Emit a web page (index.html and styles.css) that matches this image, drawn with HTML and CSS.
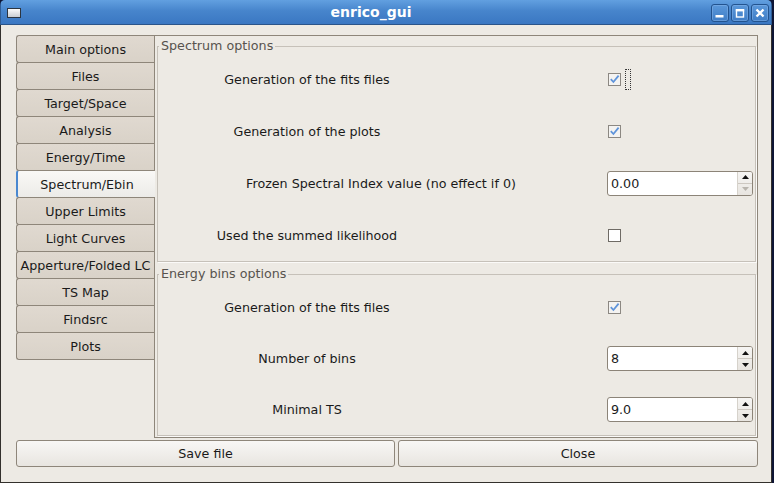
FILE: index.html
```html
<!DOCTYPE html>
<html>
<head>
<meta charset="utf-8">
<title>enrico_gui</title>
<link rel="stylesheet" href="styles.css">
</head>
<body>
<div class="window">
  <div class="titlebar">
    <span class="winicon"></span>
    <span class="title">enrico_gui</span>
    <div class="wbtns">
      <span class="wbtn"><svg width="16" height="16" viewBox="0 0 16 16"><rect x="3.5" y="10" width="8" height="2.5" fill="#fff"/></svg></span>
      <span class="wbtn"><svg width="16" height="16" viewBox="0 0 16 16"><rect x="4.5" y="5" width="7" height="7" fill="none" stroke="#fff" stroke-width="1.4"/><rect x="3.8" y="4" width="8.4" height="2.4" fill="#fff"/></svg></span>
      <span class="wbtn"><svg width="16" height="16" viewBox="0 0 16 16"><path d="M4.5 4.5 L11.5 11.5 M11.5 4.5 L4.5 11.5" stroke="#fff" stroke-width="2.3" fill="none"/></svg></span>
    </div>
  </div>
  <div class="body">
    <div class="notebook">
      <div class="tabs">
        <div class="tab">Main options</div>
        <div class="tab">Files</div>
        <div class="tab">Target/Space</div>
        <div class="tab">Analysis</div>
        <div class="tab">Energy/Time</div>
        <div class="tab active">Spectrum/Ebin</div>
        <div class="tab">Upper Limits</div>
        <div class="tab">Light Curves</div>
        <div class="tab">Apperture/Folded LC</div>
        <div class="tab">TS Map</div>
        <div class="tab">Findsrc</div>
        <div class="tab">Plots</div>
      </div>
      <div class="page">
        <fieldset class="frame f1">
          <legend>Spectrum options</legend>
          <div class="row">
            <span class="lbl">Generation of the fits files</span>
            <span class="cbw"><span class="cb on"><svg width="11" height="11" viewBox="0 0 11 11"><path d="M1.8 5.2 L4.4 8 L9.6 1.6" fill="none" stroke="#5f94da" stroke-width="1.8"/></svg></span><span class="focus"></span></span>
          </div>
          <div class="row">
            <span class="lbl">Generation of the plots</span>
            <span class="cbw"><span class="cb on"><svg width="11" height="11" viewBox="0 0 11 11"><path d="M1.8 5.2 L4.4 8 L9.6 1.6" fill="none" stroke="#5f94da" stroke-width="1.8"/></svg></span></span>
          </div>
          <div class="row">
            <span class="lbl wide">Frozen Spectral Index value (no effect if 0)</span>
            <div class="spin"><span class="sv">0.00</span><span class="sb"><span class="up"><svg width="7" height="4" viewBox="0 0 7 4"><polygon points="0,4 7,4 3.5,0" fill="#111"/></svg></span><span class="dn"><svg width="7" height="4" viewBox="0 0 7 4"><polygon points="0,0 7,0 3.5,4" fill="#b9b5ae"/></svg></span></span></div>
          </div>
          <div class="row">
            <span class="lbl">Used the summed likelihood</span>
            <span class="cbw"><span class="cb"></span></span>
          </div>
        </fieldset>
        <fieldset class="frame f2">
          <legend>Energy bins options</legend>
          <div class="row">
            <span class="lbl">Generation of the fits files</span>
            <span class="cbw"><span class="cb on"><svg width="11" height="11" viewBox="0 0 11 11"><path d="M1.8 5.2 L4.4 8 L9.6 1.6" fill="none" stroke="#5f94da" stroke-width="1.8"/></svg></span></span>
          </div>
          <div class="row">
            <span class="lbl">Number of bins</span>
            <div class="spin"><span class="sv">8</span><span class="sb"><span class="up"><svg width="7" height="4" viewBox="0 0 7 4"><polygon points="0,4 7,4 3.5,0" fill="#111"/></svg></span><span class="dn"><svg width="7" height="4" viewBox="0 0 7 4"><polygon points="0,0 7,0 3.5,4" fill="#111"/></svg></span></span></div>
          </div>
          <div class="row">
            <span class="lbl">Minimal TS</span>
            <div class="spin"><span class="sv">9.0</span><span class="sb"><span class="up"><svg width="7" height="4" viewBox="0 0 7 4"><polygon points="0,4 7,4 3.5,0" fill="#111"/></svg></span><span class="dn"><svg width="7" height="4" viewBox="0 0 7 4"><polygon points="0,0 7,0 3.5,4" fill="#111"/></svg></span></span></div>
          </div>
        </fieldset>
      </div>
    </div>
    <div class="actions">
      <button class="btn save">Save file</button>
      <button class="btn close">Close</button>
    </div>
  </div>
</div>
</body>
</html>
```

FILE: styles.css
```css
* { box-sizing: border-box; }
html, body { margin: 0; padding: 0; }
body {
  width: 774px;
  height: 483px;
  overflow: hidden;
  background: #0e1535;
  font-family: "DejaVu Sans", "Liberation Sans", sans-serif;
  font-size: 12.7px;
  color: #1a1a1a;
}
.window {
  width: 772px;
  height: 483px;
  display: flex;
  flex-direction: column;
  border-radius: 5px 5px 0 0;
  overflow: hidden;
}
.titlebar {
  height: 25px;
  flex: none;
  display: flex;
  align-items: center;
  background: linear-gradient(#62a0e0, #4785cc 45%, #3a77c2);
  border-bottom: 1px solid #2a5489;
  border-left: 1px solid #2f5d95;
  border-right: 1px solid #2f5d95;
}
.winicon {
  width: 14px;
  height: 10px;
  margin-left: 6px;
  margin-top: 1px;
  border: 1px solid #2c3540;
  background: linear-gradient(#fbfbfb, #c9cdd2);
}
.title {
  flex: 1;
  text-align: center;
  padding-left: 10px;
  color: #fff;
  font-weight: bold;
  font-size: 14px;
  line-height: 24px;
}
.wbtns {
  display: flex;
  gap: 2px;
  margin-right: 2px;
  margin-top: 1px;
}
.wbtn {
  width: 18px;
  height: 18px;
  border: 1px solid #22538f;
  border-radius: 3px;
  background: linear-gradient(#5b98da, #3f7dc6);
  box-shadow: inset 0 0 0 1px rgba(140, 185, 235, 0.45);
  display: flex;
  align-items: center;
  justify-content: center;
}
.body {
  flex: 1;
  background: #edeae4;
  border: 1px solid #33302c;
  border-top: none;
  padding: 10px 13px 0 15px;
  display: flex;
  flex-direction: column;
}
.notebook {
  display: flex;
  height: 403px;
  flex: none;
}
.tabs {
  width: 138px;
  flex: none;
  display: flex;
  flex-direction: column;
  position: relative;
  z-index: 1;
}
.tab {
  height: 28px;
  flex: none;
  border: 1px solid #8e867a;
  border-right: none;
  border-radius: 3px 0 0 3px;
  background: linear-gradient(#e0d9d0, #d9d2c8);
  display: flex;
  align-items: center;
  justify-content: center;
  white-space: nowrap;
}
.tab + .tab { margin-top: -1px; }
.tab.active {
  margin-right: -1px;
  background: linear-gradient(#f9f8f6, #ecebe8);
  border-left: 2px solid #4a88d0;
  padding-left: 1px;
}
.page {
  flex: 1;
  border: 1px solid #8e867a;
  background: #edeae4;
  padding: 3px 1px 0 2px;
  display: flex;
  flex-direction: column;
}
.frame {
  margin: 0;
  padding: 0;
  min-width: 0;
  border: 1px solid #c6c1b9;
  box-shadow: 1px 1px 0 #fbfaf8;
}
.f2 { margin-top: 5px; }
legend {
  padding: 0 2px;
  margin-left: 1px;
  line-height: 14px;
  color: #57534e;
}
.f2 legend { margin-bottom: 1px; }
.row {
  display: grid;
  grid-template-columns: 449px 1fr;
  align-items: center;
  height: 52px;
}
.f2 .row { height: 51px; }
.lbl {
  width: 298px;
  text-align: center;
  white-space: nowrap;
}
.lbl.wide { width: 446px; }
.cbw {
  display: flex;
  align-items: center;
  gap: 4px;
  margin-left: 1px;
}
.cb {
  width: 13px;
  height: 13px;
  border: 1px solid #6f6b65;
  background: #fff;
  display: flex;
  align-items: center;
  justify-content: center;
}
.cb.on {
  border-color: #8c8882;
  background: #f4f3f1;
}
.focus {
  width: 6px;
  height: 21px;
  border: 1px dotted #333;
  border-radius: 1px;
}
.spin {
  width: 146px;
  height: 25px;
  border: 1px solid #8c8478;
  border-radius: 3px;
  background: #fff;
  display: flex;
}
.sv {
  flex: 1;
  padding-left: 3px;
  display: flex;
  align-items: center;
}
.sb {
  width: 15px;
  flex: none;
  display: flex;
  flex-direction: column;
  border-left: 1px solid #d6d2cb;
  background: linear-gradient(#f6f5f3, #e8e5e0);
  border-radius: 0 2px 2px 0;
}
.up, .dn {
  flex: 1;
  display: flex;
  align-items: center;
  justify-content: center;
}
.up { border-bottom: 1px solid #cdc8c1; }
.actions {
  display: flex;
  gap: 3px;
  margin-top: 2px;
  height: 27px;
}
.btn {
  margin: 0;
  padding: 0;
  height: 27px;
  border: 1px solid #8e867a;
  border-radius: 3px;
  background: linear-gradient(#f8f7f5, #e8e5e0);
  font: inherit;
  color: #1a1a1a;
}
.save { flex: 0 0 379px; }
.close { flex: 1; }
```
